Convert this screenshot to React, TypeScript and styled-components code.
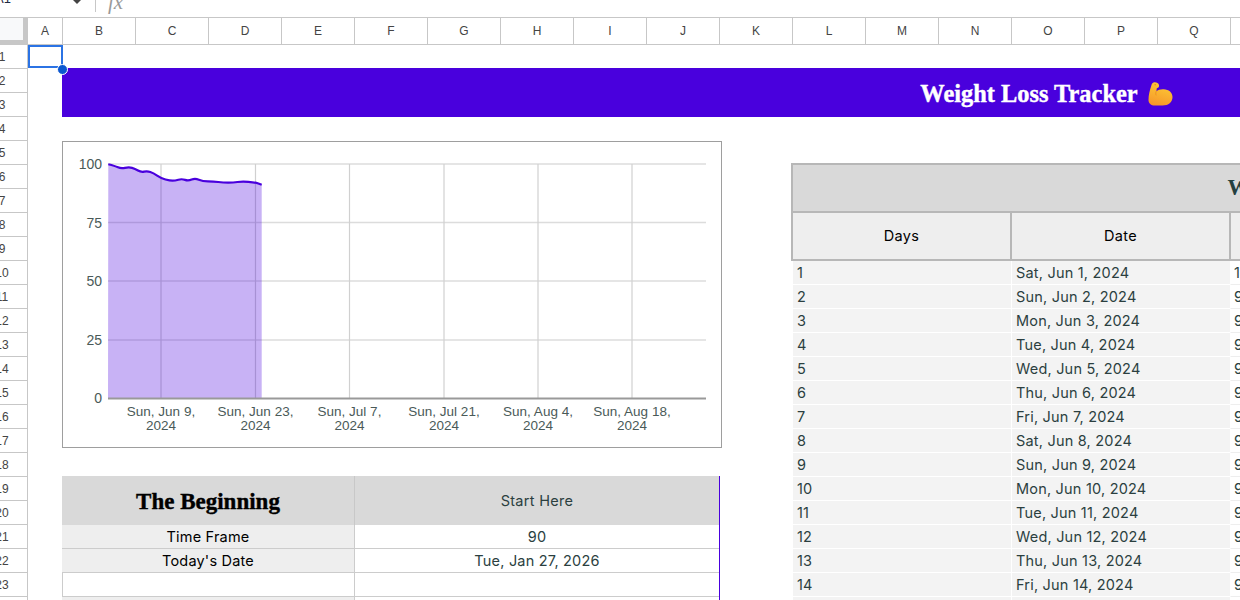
import React from "react";
import styled, { createGlobalStyle, css } from "styled-components";

const BODY_FONT = `Inter, "Noto Sans", sans-serif`;
const SERIF_FONT = `"Liberation Serif", serif`;
const UI_FONT = `"Liberation Sans", Arial, sans-serif`;

const GlobalStyle = createGlobalStyle`
  html, body {
    margin: 0;
    height: 100%;
    overflow: hidden;
    background: #fff;
  }
`;

const Page = styled.div`
  display: flex;
  flex-direction: column;
  width: 1240px;
  height: 600px;
  overflow: hidden;
  font-family: ${UI_FONT};
`;

const FormulaBar = styled.div`
  display: flex;
  align-items: flex-start;
  flex: 0 0 17px;
  overflow: hidden;
`;

const NameBox = styled.div`
  display: flex;
  align-items: flex-start;
  width: 95px;
  height: 12px;
  overflow: hidden;
  border-right: 1px solid #c7c7c7;
`;

const NameText = styled.span`
  width: 77px;
  margin: -9px 0 0 -5px;
  font-size: 13px;
  line-height: 16px;
  color: #1f2a44;
`;

const Caret = styled.span`
  width: 0;
  height: 0;
  margin-top: -1px;
  border-left: 5.5px solid transparent;
  border-right: 5.5px solid transparent;
  border-top: 5.5px solid #444;
`;

const FxLabel = styled.span`
  margin: -8px 0 0 12px;
  font-family: ${SERIF_FONT};
  font-style: italic;
  font-size: 21px;
  line-height: 21px;
  color: #999;
`;

const ColumnBar = styled.div`
  display: flex;
  flex: 0 0 27px;
  border-top: 1px solid #c7c7c7;
  box-sizing: border-box;
`;

const Corner = styled.div`
  box-sizing: border-box;
  flex: 0 0 28px;
  background: #f8f9fa;
  border-right: 5px solid #c7c7c7;
  border-bottom: 4px solid #c7c7c7;
`;

const ColumnLabel = styled.div<{ $first?: boolean }>`
  display: flex;
  align-items: center;
  justify-content: center;
  box-sizing: border-box;
  flex: 0 0 ${(p) => (p.$first ? "35px" : "73px")};
  padding-bottom: 1px;
  font-size: 12px;
  color: #444;
  border-right: 1px solid #c7c7c7;
`;

const Body = styled.div`
  display: flex;
  flex: 1;
  min-height: 0;
`;

const RowBar = styled.div`
  display: flex;
  flex-direction: column;
  flex: 0 0 28px;
  border-right: 1px solid #c7c7c7;
  box-sizing: border-box;
  overflow: hidden;
`;

const RowLabel = styled.div`
  display: flex;
  align-items: center;
  flex: 0 0 24px;
  box-sizing: border-box;
  border-top: 1px solid #c7c7c7;
  font-size: 12px;
  color: #444;
`;

const RowNumber = styled.span`
  display: flex;
  justify-content: center;
  width: 4px;
  white-space: nowrap;
`;

const Sheet = styled.div`
  position: relative;
  display: grid;
  flex: 1;
  grid-template-columns: 34px repeat(30, 73px);
  grid-auto-rows: 24px;
  overflow: hidden;
  box-shadow: inset 0 1px 0 #c7c7c7;
`;

type Place = { $col: number; $row: number; $cols?: number; $rows?: number };

const place = css<Place>`
  grid-column: ${(p) => p.$col} / span ${(p) => p.$cols ?? 1};
  grid-row: ${(p) => p.$row} / span ${(p) => p.$rows ?? 1};
`;

const Selection = styled.div<Place>`
  ${place}
  position: relative;
  margin: 1px -1px 0 0;
  border: 2px solid #2b73e4;
  z-index: 3;
`;

const Handle = styled.span`
  position: absolute;
  right: -7px;
  bottom: -9px;
  width: 9px;
  height: 9px;
  border-radius: 50%;
  background: #0b57d0;
  border: 1px solid #fff;
`;

const Banner = styled.div<Place>`
  ${place}
  display: flex;
  align-items: center;
  justify-content: center;
  gap: 10px;
  box-sizing: border-box;
  height: 49px;
  padding: 2px 2px 0 0;
  background: #4900dd;
  color: #fff;
  font-family: ${SERIF_FONT};
  font-weight: 700;
  font-size: 24.4px;
  -webkit-text-stroke: 0.4px #fff;
`;

const ChartFrame = styled.div<Place>`
  ${place}
  box-sizing: border-box;
  width: 660px;
  height: 307px;
  margin-top: 1px;
  border: 1px solid #9e9e9e;
  background: #fff;
  z-index: 2;
`;

const HeadCell = styled.div<Place & { $serif?: boolean }>`
  ${place}
  display: flex;
  align-items: center;
  justify-content: center;
  margin-bottom: -1px;
  background: #d9d9d9;
  font-size: 14.5px;
  letter-spacing: 0.3px;
  color: #2b3f3f;
  font-family: ${BODY_FONT};
  ${(p) =>
    p.$serif
      ? css`
          padding-top: 2px;
          font-family: ${SERIF_FONT};
          font-weight: 700;
          font-size: 23px;
          letter-spacing: 0;
          color: #000;
          -webkit-text-stroke: 0.4px #000;
        `
      : css`
          border-left: 1px solid #c8c8c8;
        `}
`;

const SummaryCell = styled.div<Place & { $label?: boolean }>`
  ${place}
  display: flex;
  align-items: center;
  justify-content: center;
  margin: 1px 0 -1px;
  background: ${(p) => (p.$label ? "#eeeeee" : "#fff")};
  color: ${(p) => (p.$label ? "#000" : "#2b3f3f")};
  border-bottom: 1px solid #cccccc;
  border-left: ${(p) => (p.$label ? "0" : "1px solid #cccccc")};
  font-family: ${BODY_FONT};
  font-size: 14.5px;
  letter-spacing: 0.2px;
`;

const EdgeLine = styled.div<Place>`
  ${place}
  width: 1px;
  background: #4900dd;
  z-index: 2;
`;

const LogTitle = styled.div<Place>`
  ${place}
  display: flex;
  align-items: center;
  justify-content: center;
  margin: -1px;
  background: #d9d9d9;
  border: 2px solid #b7b7b7;
  font-family: ${SERIF_FONT};
  font-weight: 700;
  font-size: 22.5px;
  color: #24403f;
`;

const LogHead = styled.div<Place>`
  ${place}
  display: flex;
  align-items: center;
  justify-content: center;
  margin: -1px;
  padding-bottom: 1px;
  background: #eeeeee;
  border: 2px solid #b7b7b7;
  font-family: ${BODY_FONT};
  font-size: 14.5px;
  letter-spacing: 0.3px;
  color: #000;
`;

const LogCell = styled.div<Place & { $plain?: boolean }>`
  ${place}
  display: flex;
  align-items: center;
  margin: 1px 0 -1px;
  padding-left: ${(p) => (p.$plain ? "3px" : "4px")};
  white-space: nowrap;
  overflow: hidden;
  background: ${(p) => (p.$plain ? "#fff" : "#f3f3f3")};
  border-bottom: 1px solid ${(p) => (p.$plain ? "#eeeeee" : "#fff")};
  border-left: 1px solid #fff;
  font-family: ${BODY_FONT};
  font-size: 14.5px;
  letter-spacing: 0.2px;
  color: #2b3f3f;
`;

const AxisText = styled.text<{ $size?: number }>`
  font-family: ${UI_FONT};
  font-size: ${(p) => p.$size ?? 13.5}px;
  fill: #4a5a58;
`;

const MuscleIcon = () => (
  <svg width="25" height="24" viewBox="0 0 25 24" aria-hidden="true">
    <defs>
      <linearGradient id="arm" x1="0.6" y1="0" x2="0.3" y2="1">
        <stop offset="0" stopColor="#fdcb35" />
        <stop offset="1" stopColor="#f6962a" />
      </linearGradient>
    </defs>
    <path
      d="M5.5 0.5 C8 0 10.5 1 11 3 C11.4 4.8 10.4 6 8.8 6.2 L8.4 9 C9.8 8 13 7 15.5 7.2 C21 7.4 24.5 10.5 24.5 15 C24.5 20 20.5 23.5 14.5 23.5 L7 23.5 C3 23.5 0.5 21.5 0.5 18 C0.5 13 1.8 8 3.2 4 C3.6 2.4 4.2 1 5.5 0.5 Z"
      fill="url(#arm)"
    />
    <path d="M8.4 9 C7.6 10.5 7.6 12 8.2 13.4" fill="none" stroke="#e8891c" strokeWidth="0.8" />
    <circle cx="7.2" cy="2.8" r="0.8" fill="#e8891c" />
  </svg>
);

const linePoints: Array<[number, number]> = [
  [108.3, 164.3], [115, 166], [121, 168.7], [129, 167], [135, 168.7], [141, 172.3],
  [147.3, 171], [153.3, 173], [161, 178.3], [170, 180.7], [175, 180.7], [181.7, 178.7],
  [188.3, 181], [195, 178], [202.7, 181.3], [213.3, 181.3], [223.3, 182.7], [233.3, 182.7],
  [241.7, 181.3], [255, 182.3], [261.7, 184.7],
];

// rounds the corners of the weight line through the midpoints of its segments
const smoothLine = (points: Array<[number, number]>) => {
  const [first, ...rest] = points;
  const parts = [`${first[0]} ${first[1]}`];
  rest.forEach(([x, y], i) => {
    const next = rest[i + 1];
    if (next) parts.push(`Q ${x} ${y} ${(x + next[0]) / 2} ${(y + next[1]) / 2}`);
    else parts.push(`L ${x} ${y}`);
  });
  return parts.join(" ");
};

const yTicks = [
  { label: "100", y: 164 },
  { label: "75", y: 222.5 },
  { label: "50", y: 281 },
  { label: "25", y: 340 },
  { label: "0", y: 398 },
];

const xTicks = [
  { label: "Sun, Jun 9,", x: 161 },
  { label: "Sun, Jun 23,", x: 255.5 },
  { label: "Sun, Jul 7,", x: 349.5 },
  { label: "Sun, Jul 21,", x: 444 },
  { label: "Sun, Aug 4,", x: 538 },
  { label: "Sun, Aug 18,", x: 632 },
];

const WeightChart = () => {
  const line = smoothLine(linePoints);
  return (
    <svg width="658" height="305" viewBox="63 142 658 305" style={{ display: "block" }}>
      {yTicks.slice(0, 4).map((t) => (
        <line key={t.y} x1="108" x2="706" y1={t.y} y2={t.y} stroke="#dcdcdc" strokeWidth="1.5" />
      ))}
      {xTicks.map((t) => (
        <line key={t.x} x1={t.x} x2={t.x} y1="164" y2="398" stroke="#d0d0d0" strokeWidth="1.2" />
      ))}
      <path d={`M 108 398 L ${line} L 261.7 398 Z`} fill="#4900dd" fillOpacity="0.3" />
      <path d={`M ${line}`} fill="none" stroke="#4900dd" strokeWidth="2.2" strokeLinejoin="round" />
      <line x1="108" x2="706" y1="398.5" y2="398.5" stroke="#999" strokeWidth="2" />
      {yTicks.map((t) => (
        <AxisText key={t.label} x="102" y={t.y + 5} textAnchor="end" $size={14}>
          {t.label}
        </AxisText>
      ))}
      {xTicks.map((t) => (
        <AxisText key={t.label} textAnchor="middle">
          <tspan x={t.x} y="416">{t.label}</tspan>
          <tspan x={t.x} y="430">2024</tspan>
        </AxisText>
      ))}
    </svg>
  );
};

const columnLetters = "ABCDEFGHIJKLMNOPQR".split("");

const logRows = [
  ["1", "Sat, Jun 1, 2024", "100"],
  ["2", "Sun, Jun 2, 2024", "99"],
  ["3", "Mon, Jun 3, 2024", "98"],
  ["4", "Tue, Jun 4, 2024", "98"],
  ["5", "Wed, Jun 5, 2024", "97"],
  ["6", "Thu, Jun 6, 2024", "96"],
  ["7", "Fri, Jun 7, 2024", "96"],
  ["8", "Sat, Jun 8, 2024", "95"],
  ["9", "Sun, Jun 9, 2024", "94"],
  ["10", "Mon, Jun 10, 2024", "93"],
  ["11", "Tue, Jun 11, 2024", "93"],
  ["12", "Wed, Jun 12, 2024", "93"],
  ["13", "Thu, Jun 13, 2024", "93"],
  ["14", "Fri, Jun 14, 2024", "93"],
  ["15", "Sat, Jun 15, 2024", "93"],
];

export default function App() {
  return (
    <Page>
      <GlobalStyle />
      <FormulaBar>
        <NameBox>
          <NameText>A1</NameText>
          <Caret />
        </NameBox>
        <FxLabel>fx</FxLabel>
      </FormulaBar>
      <ColumnBar>
        <Corner />
        {columnLetters.map((letter, i) => (
          <ColumnLabel key={letter} $first={i === 0}>
            {letter}
          </ColumnLabel>
        ))}
      </ColumnBar>
      <Body>
        <RowBar>
          {Array.from({ length: 24 }, (_, i) => (
            <RowLabel key={i}>
              <RowNumber>{i + 1}</RowNumber>
            </RowLabel>
          ))}
        </RowBar>
        <Sheet>
          <Selection $col={1} $row={1}>
            <Handle />
          </Selection>
          <Banner $col={2} $row={2} $cols={27} $rows={2}>
            Weight Loss Tracker <MuscleIcon />
          </Banner>

          <ChartFrame $col={2} $row={5} $cols={10} $rows={13}>
            <WeightChart />
          </ChartFrame>

          <HeadCell $col={2} $row={19} $cols={4} $rows={2} $serif>
            The Beginning
          </HeadCell>
          <HeadCell $col={6} $row={19} $cols={5} $rows={2}>
            Start Here
          </HeadCell>
          <SummaryCell $col={2} $row={21} $cols={4} $label>Time Frame</SummaryCell>
          <SummaryCell $col={6} $row={21} $cols={5}>90</SummaryCell>
          <SummaryCell $col={2} $row={22} $cols={4} $label>Today's Date</SummaryCell>
          <SummaryCell $col={6} $row={22} $cols={5}>Tue, Jan 27, 2026</SummaryCell>
          <SummaryCell $col={2} $row={23} $cols={4} />
          <SummaryCell $col={6} $row={23} $cols={5} />
          <SummaryCell $col={2} $row={24} $cols={4} $label />
          <SummaryCell $col={6} $row={24} $cols={5} />
          <EdgeLine $col={11} $row={19} $rows={6} />

          <LogTitle $col={12} $row={6} $cols={14} $rows={2}>
            Weight Tracker
          </LogTitle>
          <LogHead $col={12} $row={8} $cols={3} $rows={2}>Days</LogHead>
          <LogHead $col={15} $row={8} $cols={3} $rows={2}>Date</LogHead>
          <LogHead $col={18} $row={8} $cols={3} $rows={2}>Weight</LogHead>
          {logRows.map(([day, date, weight], i) => (
            <React.Fragment key={day}>
              <LogCell $col={12} $row={10 + i} $cols={3}>{day}</LogCell>
              <LogCell $col={15} $row={10 + i} $cols={3}>{date}</LogCell>
              <LogCell $col={18} $row={10 + i} $cols={3} $plain>{weight}</LogCell>
            </React.Fragment>
          ))}
        </Sheet>
      </Body>
    </Page>
  );
}
